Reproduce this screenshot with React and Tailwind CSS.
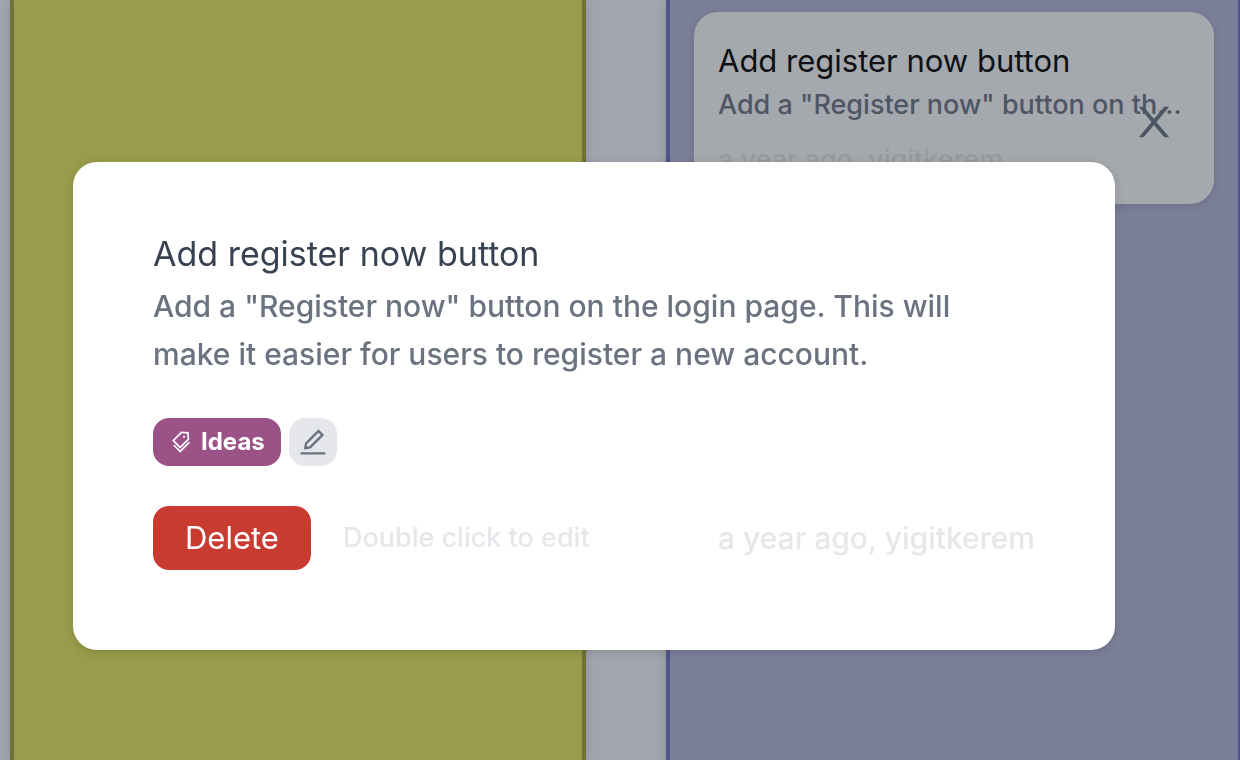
import { AiOutlineEdit, AiOutlineTags } from "react-icons/ai";

const task = {
  title: "Add register now button",
  description:
    'Add a "Register now" button on the login page. This will make it easier for users to register a new account.',
  shortDescription: 'Add a "Register now" button on th...',
  meta: "a year ago, yigitkerem",
  tag: "Ideas",
};

function CloseIcon() {
  return (
    <svg viewBox="0 0 1024 1024" className="size-12" fill="currentColor" aria-hidden="true">
      <path d="M563.8 512l262.5-312.9c4.4-5.2.7-13.1-6.1-13.1h-79.8c-4.7 0-9.2 2.1-12.3 5.7L511.6 449.8 295.1 191.7c-3-3.6-7.5-5.7-12.3-5.7H203c-6.8 0-10.5 7.9-6.1 13.1L459.4 512 196.9 824.9A7.95 7.95 0 0 0 203 838h79.8c4.7 0 9.2-2.1 12.3-5.7l216.5-258.1 216.5 258.1c3 3.6 7.5 5.7 12.3 5.7h79.8c6.8 0 10.5-7.9 6.1-13.1L563.8 512z" />
    </svg>
  );
}

function Column({ className, children }) {
  return (
    <section
      className={`flex-1 min-w-0 border-x-4 px-6 pt-3 shadow-[0_2px_10px_rgba(0,0,0,0.14)] ${className}`}
    >
      {children}
    </section>
  );
}

function TaskCard({ title, description, meta }) {
  return (
    <article className="rounded-3xl bg-[#a5a8ac] p-6 shadow-[0_2px_10px_rgba(0,0,0,0.14)]">
      <h3 className="text-[31px] leading-[50px] font-normal text-[#0d1116] truncate">{title}</h3>
      <p className="text-[27px] leading-[38px] text-[#4f5665] whitespace-nowrap">{description}</p>
      <p className="mt-4 text-[27px] leading-10 text-[#979a9f] truncate">{meta}</p>
    </article>
  );
}

function TaskModal({ task }) {
  return (
    <div className="fixed inset-0 pl-[73px] pr-[125px] pt-[162px]">
      <div role="dialog" aria-label={task.title} className="relative">
        <button
          type="button"
          aria-label="Close"
          className="absolute -top-16 -right-[63px] text-[#4b5563]"
        >
          <CloseIcon />
        </button>

        <div className="rounded-3xl bg-white px-20 pt-16 pb-20 shadow-[0_2px_10px_rgba(0,0,0,0.14)]">
          <h2 className="text-[34px] leading-14 font-normal text-[#374151]">{task.title}</h2>
          <p className="text-[30px] leading-[48px] text-[#6b7280]">{task.description}</p>

          <div className="mt-10 flex gap-2">
            <span className="flex h-12 items-center gap-2 rounded-2xl bg-[#9b5287] px-4 text-2xl font-bold text-white">
              <AiOutlineTags />
              {task.tag}
            </span>
            <button
              type="button"
              aria-label="Edit tag"
              className="flex size-12 items-center justify-center rounded-2xl bg-gray-200 text-[32px] text-[#6b7280]"
            >
              <AiOutlineEdit />
            </button>
          </div>

          <div className="mt-10 flex items-center">
            <button
              type="button"
              className="h-16 rounded-2xl bg-[#c93a31] px-8 text-[31px] leading-[48px] font-normal text-white"
            >
              Delete
            </button>
            <span className="ml-8 text-[27px] leading-10 text-gray-200">Double click to edit</span>
            <span className="ml-auto text-[30px] leading-[48px] text-gray-200">{task.meta}</span>
          </div>
        </div>
      </div>
    </div>
  );
}

export default function App() {
  return (
    <div className="min-h-screen overflow-hidden bg-[#a2a5ad] font-['Inter',sans-serif] font-medium">
      <main className="-mr-0.5 ml-2.5 flex min-h-screen gap-20">
        <Column className="border-[#6f7338] bg-[#999c4a]" />
        <Column className="border-[#50568a] bg-[#7b7f99]">
          <TaskCard
            title={task.title}
            description={task.shortDescription}
            meta={task.meta}
          />
        </Column>
      </main>
      <TaskModal task={task} />
    </div>
  );
}
